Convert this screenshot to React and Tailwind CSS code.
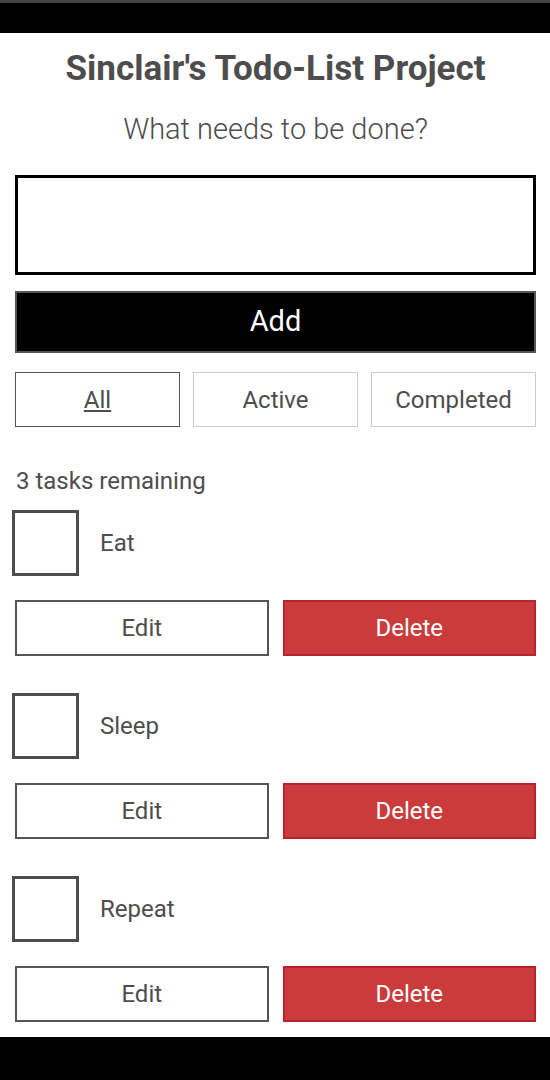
import React, { useState } from 'react';

const TASKS = [
  { id: 1, name: 'Eat' },
  { id: 2, name: 'Sleep' },
  { id: 3, name: 'Repeat' },
];

const FILTERS = ['All', 'Active', 'Completed'];

const Task = ({ task }) => (
  <li className="flex flex-col">
    <label className="flex items-center h-[66px]">
      <span className="w-[67px] h-[66px] border-[3px] border-[#4d4d4d] bg-white -ml-[3px] shrink-0" />
      <span className="ml-[21px] text-[24px] text-[#4d4d4d]">{task.name}</span>
    </label>
    <div className="flex gap-[14px] mt-[24px]">
      <button className="flex-1 h-[56px] border-2 border-[#555] bg-white text-[24px] text-[#4d4d4d]">
        Edit
      </button>
      <button className="flex-1 h-[56px] border-2 border-[#b8232f] bg-[#ca3c3c] text-[24px] text-white">
        Delete
      </button>
    </div>
  </li>
);

const App = () => {
  const [filter] = useState('All');

  return (
    <div className="w-full h-screen flex flex-col bg-white" style={{ fontFamily: 'Roboto, "Noto Sans", sans-serif' }}>
      <div className="h-[33px] shrink-0 bg-black border-t-[3px] border-[#444]" />

      <main className="flex-1 px-[15px] pr-[14px] overflow-hidden">
        <h1 className="text-center font-bold text-[35px] leading-none text-[#4d4d4d] mt-[18px]">
          Sinclair's Todo-List Project
        </h1>
        <h2 className="text-center font-light text-[29px] leading-none text-[#4d4d4d] mt-[29px]">
          What needs to be done?
        </h2>

        <input
          type="text"
          className="block w-full h-[100px] mt-[31px] border-[3px] border-black bg-white outline-none"
        />
        <button className="block w-full h-[62px] mt-[16px] bg-black border-2 border-[#555] text-white text-[29px]">
          Add
        </button>

        <div className="flex gap-[13px] mt-[19px]">
          {FILTERS.map((f) => (
            <button
              key={f}
              className={`flex-1 h-[55px] bg-white text-[24px] text-[#4d4d4d] border ${
                f === filter ? 'border-[#555] underline underline-offset-2' : 'border-[#ccc]'
              }`}
            >
              {f}
            </button>
          ))}
        </div>

        <p className="mt-[42px] text-[24px] leading-none text-[#4d4d4d] ml-[1px]">3 tasks remaining</p>

        <ul className="flex flex-col gap-[37px] mt-[17px]">
          {TASKS.map((t) => (
            <Task key={t.id} task={t} />
          ))}
        </ul>
      </main>

      <div className="h-[43px] shrink-0 bg-black" />
    </div>
  );
};

export default App;
